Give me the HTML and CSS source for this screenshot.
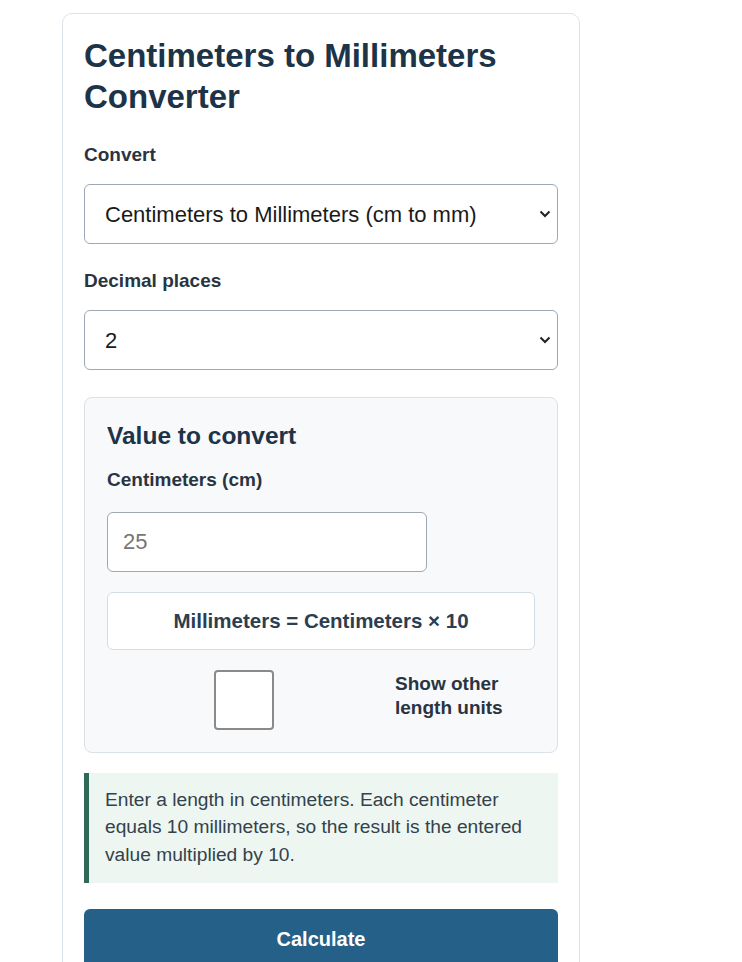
FILE: index.html
```html
<!DOCTYPE html>
<html lang="en">
<head>
  <meta charset="UTF-8">
  <meta name="viewport" content="width=device-width, initial-scale=1.0">
  <title>Centimeters to Millimeters Converter</title>
  <link rel="stylesheet" href="styles.css">
</head>
<body>

  <div class="page">
    <div class="card">
      <h1>Centimeters to Millimeters Converter</h1>

      <div class="field">
        <label for="direction">Convert</label>
        <select id="direction">
          <option>Centimeters to Millimeters (cm to mm)</option>
          <option>Millimeters to Centimeters (mm to cm)</option>
        </select>
      </div>

      <div class="field">
        <label for="decimals">Decimal places</label>
        <select id="decimals">
          <option>0</option>
          <option>1</option>
          <option selected>2</option>
          <option>3</option>
          <option>4</option>
        </select>
      </div>

      <div class="panel">
        <h2>Value to convert</h2>
        <label for="value">Centimeters (cm)</label>
        <input type="number" id="value" class="value-input" placeholder="25">

        <div class="formula">Millimeters = Centimeters × 10</div>

        <div class="check-row">
          <div class="check-cell">
            <input type="checkbox" id="others">
          </div>
          <label for="others">Show other length units</label>
        </div>
      </div>

      <div class="note">
        Enter a length in centimeters. Each centimeter equals 10 millimeters, so the result is the entered value multiplied by 10.
      </div>

      <button class="calc-btn" type="button">Calculate</button>
    </div>
  </div>

</body>
</html>
```

FILE: styles.css
```css
body {
  margin: 0;
  background-color: #ffffff;
  font-family: "Liberation Sans", Arial, sans-serif;
  color: #2d3748;
}

.page {
  padding: 13px 0 0 62px;
}

.card {
  width: 518px;
  box-sizing: border-box;
  padding: 21px;
  border: 1px solid #dde3ea;
  border-radius: 10px;
  background-color: #ffffff;
}

h1 {
  margin: 0 0 26px;
  font-size: 33px;
  line-height: 41px;
  font-weight: bold;
  color: #1c3348;
}

label {
  display: block;
  margin-bottom: 17px;
  font-size: 19px;
  line-height: 24px;
  font-weight: bold;
  color: #2a3441;
}

.field {
  margin-bottom: 25px;
}

select {
  display: block;
  width: 100%;
  height: 60px;
  box-sizing: border-box;
  padding: 0 30px 0 20px;
  font-family: inherit;
  font-size: 22px;
  color: #1a1a1a;
  border: 1px solid #9ea8b3;
  border-radius: 6px;
  background-color: #ffffff;
  background-image: url("data:image/svg+xml;utf8,<svg xmlns='http://www.w3.org/2000/svg' width='12' height='8' viewBox='0 0 12 8'><path d='M1.5 1.5 L6 6 L10.5 1.5' fill='none' stroke='%23222' stroke-width='2'/></svg>");
  background-repeat: no-repeat;
  background-position: right 6px center;
  appearance: none;
  -webkit-appearance: none;
}

.panel {
  margin-top: 27px;
  padding: 22px;
  border: 1px solid #dae1e8;
  border-radius: 8px;
  background-color: #f7f9fb;
}

h2 {
  margin: 1px 0 18px;
  font-size: 24.5px;
  line-height: 29px;
  font-weight: bold;
  color: #1c3348;
}

.value-input {
  display: block;
  width: 320px;
  height: 60px;
  box-sizing: border-box;
  margin-top: 20px;
  padding: 0 15px;
  font-family: inherit;
  font-size: 22px;
  color: #1a1a1a;
  border: 1px solid #9ea8b3;
  border-radius: 6px;
  background-color: #ffffff;
}

.value-input::placeholder {
  color: #767676;
}

.formula {
  margin-top: 20px;
  height: 58px;
  box-sizing: border-box;
  display: flex;
  align-items: center;
  justify-content: center;
  border: 1px solid #d3dde6;
  border-radius: 6px;
  background-color: #ffffff;
  font-size: 20.5px;
  font-weight: bold;
  color: #2c3e50;
}

.check-row {
  margin-top: 20px;
  display: grid;
  grid-template-columns: 274px 1fr;
  column-gap: 14px;
  align-items: start;
}

.check-cell {
  display: flex;
  justify-content: center;
}

.check-row input {
  width: 60px;
  height: 60px;
  margin: 0;
  box-sizing: border-box;
  border: 2px solid #8a8a8a;
  border-radius: 4px;
  background-color: #ffffff;
  appearance: none;
  -webkit-appearance: none;
}

.check-row label {
  margin: 2px 0 0;
}

.note {
  margin-top: 20px;
  padding: 13px 16px 15px;
  border-left: 5px solid #2e6a55;
  background-color: #eef6f2;
  font-size: 19.2px;
  line-height: 27.4px;
  color: #33424b;
}

.calc-btn {
  display: block;
  width: 100%;
  height: 60px;
  margin-top: 26px;
  border: none;
  border-radius: 6px;
  background-color: #246087;
  color: #ffffff;
  font-family: inherit;
  font-size: 20px;
  font-weight: bold;
  cursor: pointer;
}
```
